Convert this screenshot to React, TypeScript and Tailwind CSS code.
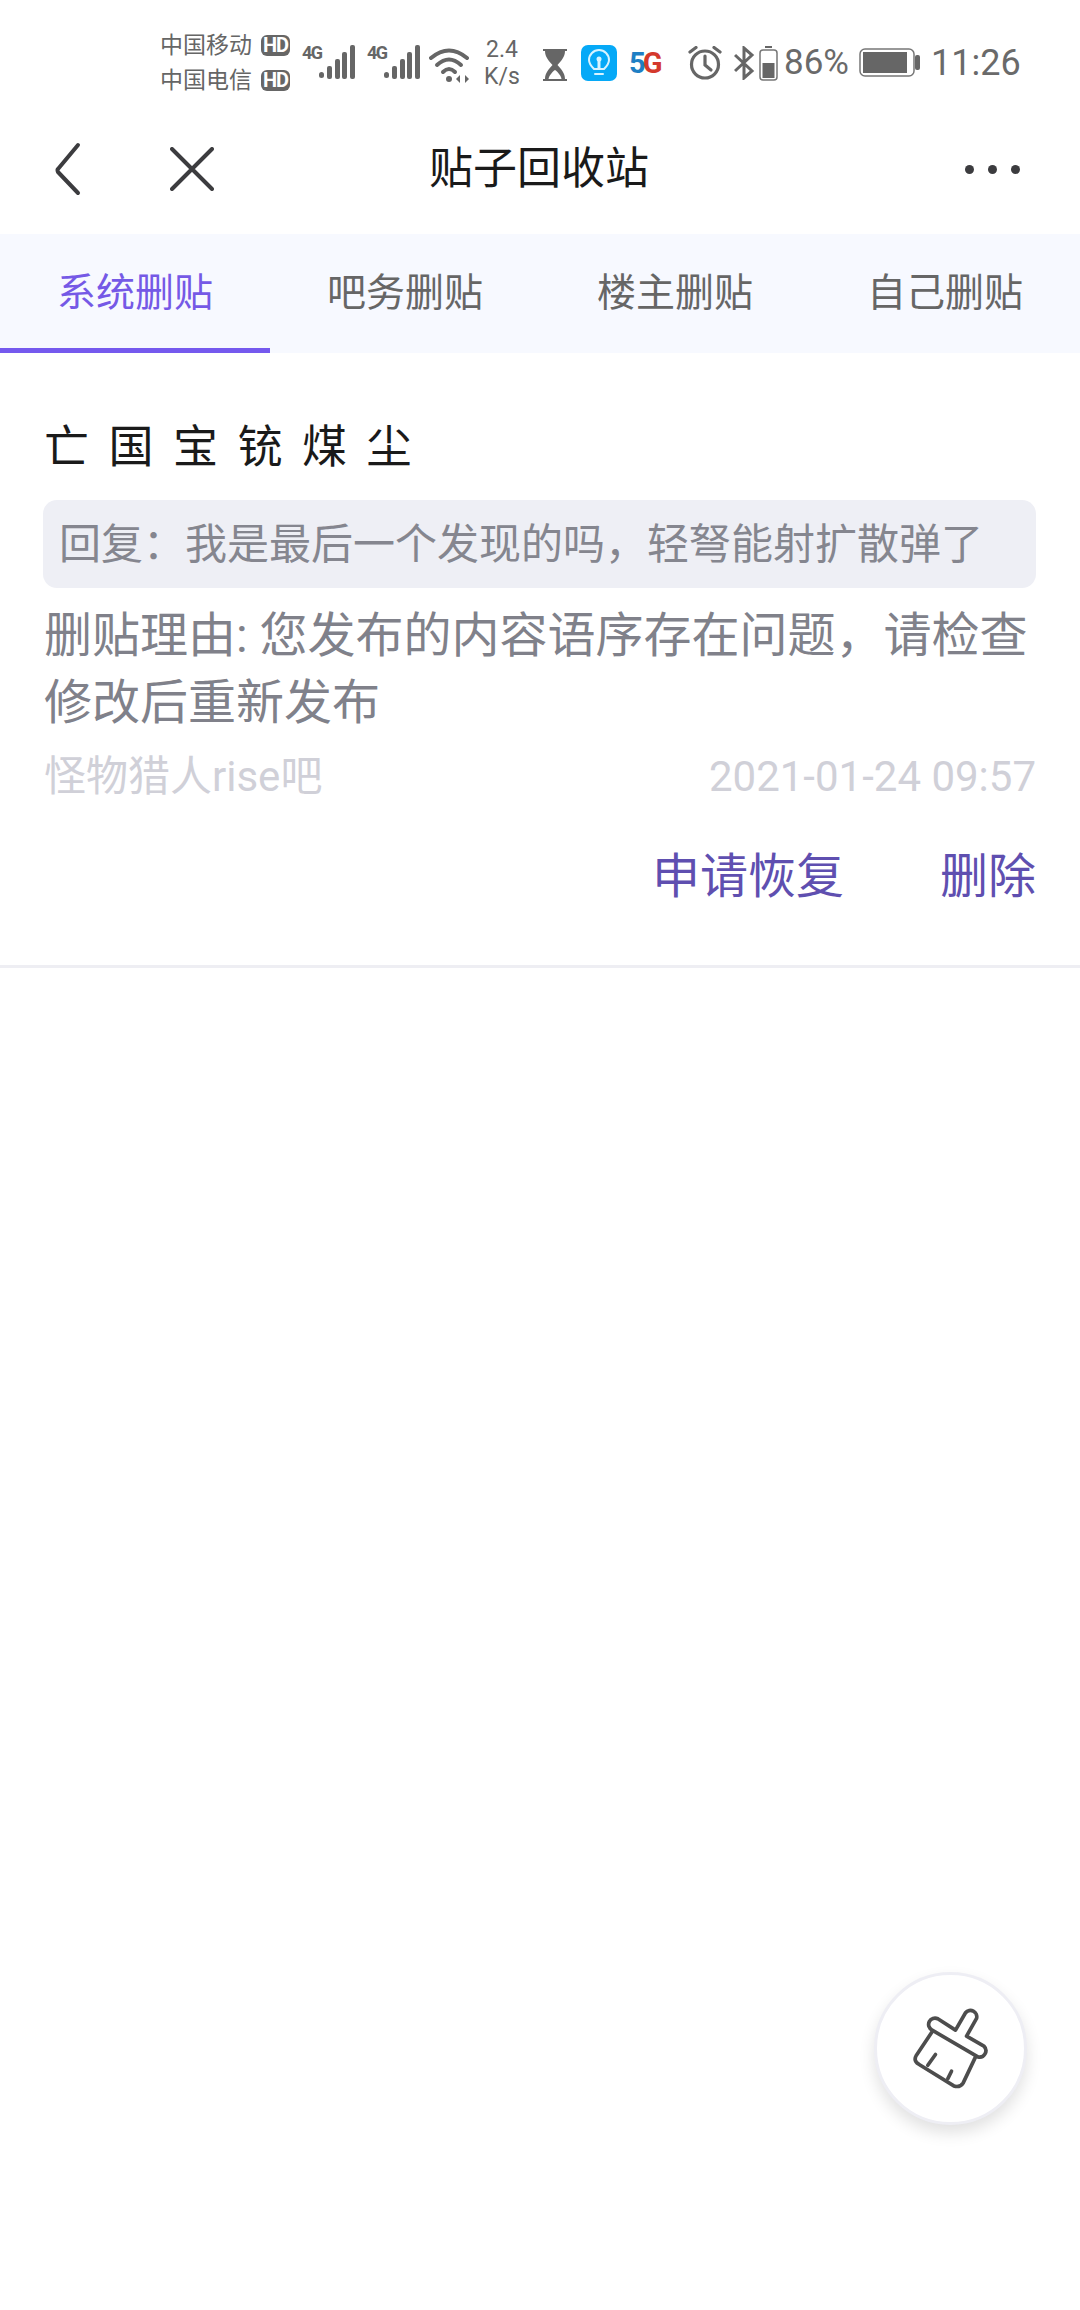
const cjk = "font-['Roboto','Noto_Sans_CJK_SC',sans-serif]"

const Signal = () => (
    <svg width="36" height="34" viewBox="0 0 36 34" className="-ml-px">
        <rect x="0" y="27" width="5" height="6" rx="2.5" fill="#666" />
        <rect x="8" y="21" width="5" height="13" rx="2" fill="#666" />
        <rect x="16" y="14" width="5" height="20" rx="2" fill="#666" />
        <rect x="23" y="7" width="5" height="27" rx="2" fill="#666" />
        <rect x="31" y="0" width="5" height="34" rx="2" fill="#666" />
    </svg>
)

const NetType = () => (
    <div className="flex items-end h-[34px]">
        <span className="self-start -mt-px w-[18px] text-[18px] leading-[18px] font-bold text-[#666] tracking-[-1.5px]">4G</span>
        <Signal />
    </div>
)

const HdBadge = () => (
    <span className="w-[29px] h-[21px] rounded-[6px] bg-[#666] text-white text-[20px] leading-[21px] font-bold text-center tracking-[-1px]">HD</span>
)

const StatusBar = () => (
    <div className="h-[106px] pt-[20px] pl-[160px] flex items-center text-[#666] whitespace-nowrap">
        <div className="flex flex-col gap-[7px] w-[142px]">
            <div className="flex items-center gap-[9px] h-[28px]">
                <span className="text-[23px] leading-[28px]">中国移动</span>
                <HdBadge />
            </div>
            <div className="flex items-center gap-[9px] h-[28px]">
                <span className="text-[23px] leading-[28px]">中国电信</span>
                <HdBadge />
            </div>
        </div>
        <div className="-mt-[3px] flex gap-[12px]">
            <NetType />
            <NetType />
        </div>
        <svg width="42" height="38" viewBox="0 0 42 38" className="ml-[9px] mt-[3px]" fill="none" stroke="#666" strokeWidth="4" strokeLinecap="round">
            <path d="M2 12 Q20 -3 38 12" />
            <path d="M8 19 Q20 8 32 19" />
            <path d="M14 26 Q20 20 26 26" />
            <circle cx="20" cy="33" r="3" fill="#666" stroke="none" />
            <path d="M31 29 L27 33 L31 37 Z M36 29 L40 33 L36 37 Z" fill="#666" stroke="none" />
        </svg>
        <div className="ml-[11px] w-[40px] flex flex-col items-center text-[23px] leading-[27px]">
            <span>2.4</span>
            <span>K/s</span>
        </div>
        <svg width="26" height="32" viewBox="0 0 26 32" className="ml-[20px] mt-[3px]" fill="#666">
            <path d="M1 0 H25 V2 H23 C23 8 19 12 15.5 16 C19 20 23 24 23 30 H25 V32 H1 V30 H3 C3 24 7 20 10.5 16 C7 12 3 8 3 2 H1 Z" />
            <path d="M13 21 C10 23 7 27 6.5 30 H19.5 C19 27 16 23 13 21 Z" fill="#fff" />
        </svg>
        <div className="ml-[13px] w-[36px] h-[36px] rounded-[7px] bg-[#06a9f7] flex items-center justify-center">
            <svg width="22" height="28" viewBox="0 0 22 28" fill="none" stroke="#d8f3ff" strokeWidth="2" strokeLinecap="round">
                <path d="M6 20 C3 17 1 14 1 11 A10 10 0 0 1 21 11 C21 14 19 17 16 20 Z" />
                <path d="M7 25 H15" />
                <path d="M11 19 V12" strokeWidth="3" />
                <circle cx="11" cy="10" r="2.5" fill="#d8f3ff" stroke="none" />
            </svg>
        </div>
        <div className="ml-[12px] w-[38px] text-[29px] leading-[30px] font-bold tracking-[-3px]">
            <span className="text-[#1f7fc4]">5</span>
            <span className="text-[#d4392c]">G</span>
        </div>
        <svg width="34" height="34" viewBox="0 0 34 34" className="ml-[21px]" fill="none" stroke="#666" strokeWidth="3.2" strokeLinecap="round">
            <circle cx="17" cy="18.5" r="13.5" />
            <path d="M17 10 V19 L23 24" />
            <path d="M2 6 L8 1.5 M32 6 L26 1.5" />
        </svg>
        <svg width="21" height="34" viewBox="0 0 21 34" className="ml-[12px]" fill="none" stroke="#666" strokeWidth="3">
            <path d="M1 9 L18 25 L10 32 V2 L18 9 L1 25" />
        </svg>
        <svg width="19" height="35" viewBox="0 0 19 35" className="ml-[4px]" fill="none">
            <rect x="6" y="0" width="7" height="2" fill="#666" />
            <rect x="1" y="4" width="17" height="30" rx="3" stroke="#777" strokeWidth="1.5" />
            <rect x="3.5" y="17" width="12" height="15" fill="#666" />
        </svg>
        <span className="ml-[6px] w-[68px] text-[35px] leading-[40px] text-[#6a6a6a]">86%</span>
        <svg width="61" height="30" viewBox="0 0 61 30" className="ml-[7px]" fill="none">
            <rect x="1" y="1" width="54" height="27" rx="5" stroke="#777" strokeWidth="1.5" />
            <rect x="4" y="4" width="44" height="21" fill="#666" />
            <rect x="56" y="7" width="5" height="15" rx="2" fill="#666" />
        </svg>
        <span className="ml-[11px] text-[36px] leading-[40px] text-[#6a6a6a]">11:26</span>
    </div>
)

const NavBar = () => (
    <div className="h-[128px] pb-[2px] pl-[52px] pr-[60px] flex items-center">
        <svg width="30" height="54" viewBox="0 0 30 54" fill="none" stroke="#3c3c3f" strokeWidth="4" strokeLinecap="round" strokeLinejoin="round">
            <path d="M26 3 L6 27 Q5 28 6 30 L26 51" />
        </svg>
        <svg width="44" height="44" viewBox="0 0 44 44" className="ml-[88px]" fill="none" stroke="#3c3c3f" strokeWidth="4" strokeLinecap="round">
            <path d="M2 2 L42 42 M42 2 L2 42" />
        </svg>
        <h1 className="flex-1 -ml-[101px] text-center text-[44px] leading-[60px] text-[#1a1a1a]">贴子回收站</h1>
        <div className="flex gap-[14px]">
            <span className="w-[9px] h-[9px] rounded-full bg-[#3c3c3f]" />
            <span className="w-[9px] h-[9px] rounded-full bg-[#3c3c3f]" />
            <span className="w-[9px] h-[9px] rounded-full bg-[#3c3c3f]" />
        </div>
    </div>
)

const tabs = ["系统删贴", "吧务删贴", "楼主删贴", "自己删贴"]

const Tabs = () => (
    <div className="h-[119px] grid grid-cols-4 bg-[#f7f9ff]">
        {tabs.map((tab, i) => (
            <div
                key={tab}
                className={i === 0
                    ? "flex items-center justify-center text-[39px] text-[#7559e6] border-b-[5px] border-[#7559ee] pt-[5px]"
                    : "flex items-center justify-center text-[39px] text-[#666]"}
            >
                {tab}
            </div>
        ))}
    </div>
)

const PostCard = () => (
    <div className="px-[44px] pb-[58px] border-b-[3px] border-[#eeeef3]">
        <h2 className="mt-[65px] text-[45px] leading-[60px] tracking-[19.5px] text-[#1a1a1a]">亡国宝铳煤尘</h2>
        <div className="mt-[22px] -ml-px h-[88px] px-[16px] rounded-[14px] bg-[#eeeff5] flex items-center text-[42px] text-[#85868f] whitespace-nowrap">
            回复：我是最后一个发现的吗，轻弩能射扩散弹了
        </div>
        <p className="mt-[14px] text-[48px] leading-[67px] text-[#80818a]">
            删贴理由: 您发布的内容语序存在问题，请检查修改后重新发布
        </p>
        <div className="mt-[16px] flex justify-between text-[42px] leading-[50px] text-[#d0d0d8]">
            <span>怪物猎人rise吧</span>
            <span>2021-01-24 09:57</span>
        </div>
        <div className="mt-[45px] flex justify-end gap-[96px] text-[48px] leading-[60px] text-[#5f4fb0]">
            <span>申请恢复</span>
            <span>删除</span>
        </div>
    </div>
)

const CleanButton = () => (
    <div className="absolute right-[53px] bottom-[185px] w-[153px] h-[153px] rounded-full bg-white border-[3px] border-[#eeeef4] shadow-[0_8px_16px_rgba(0,0,0,0.12)] flex items-center justify-center">
        <svg width="147" height="147" viewBox="110 105 440 440" fill="none" stroke="#4d4d4d" strokeWidth="11" strokeLinecap="round" strokeLinejoin="round">
            <path d="M292 236 L345 270 L375 218 A19 19 0 0 1 408 235 L378 288 L430 318 A19 19 0 0 1 412 350 L275 270 A19 19 0 0 1 292 236 Z" />
            <path d="M275 275 L228 345 Q218 362 235 372 L340 437 Q358 443 368 428 L405 350" />
            <path d="M262 375 L285 343 M322 415 L333 393" />
        </svg>
    </div>
)

export default function App() {
    return (
        <div className={`relative w-[1080px] h-[2310px] bg-white overflow-hidden ${cjk}`}>
            <StatusBar />
            <NavBar />
            <Tabs />
            <PostCard />
            <CleanButton />
        </div>
    )
}
